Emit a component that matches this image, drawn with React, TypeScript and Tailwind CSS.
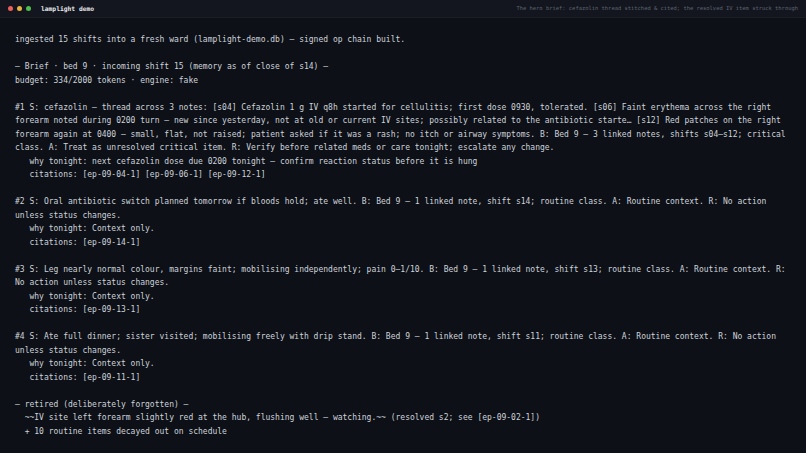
import React from "react";

const mono = { fontFamily: '"DejaVu Sans Mono", "Liberation Mono", monospace' };

const body = `ingested 15 shifts into a fresh ward (lamplight-demo.db) — signed op chain built.

— Brief · bed 9 · incoming shift 15 (memory as of close of s14) —
budget: 334/2000 tokens · engine: fake

#1 S: cefazolin — thread across 3 notes: [s04] Cefazolin 1 g IV q8h started for cellulitis; first dose 0930, tolerated. [s06] Faint erythema across the right forearm noted during 0200 turn — new since yesterday, not at old or current IV sites; possibly related to the antibiotic starte… [s12] Red patches on the right forearm again at 0400 — small, flat, not raised; patient asked if it was a rash; no itch or airway symptoms. B: Bed 9 — 3 linked notes, shifts s04–s12; critical class. A: Treat as unresolved critical item. R: Verify before related meds or care tonight; escalate any change.
   why tonight: next cefazolin dose due 0200 tonight — confirm reaction status before it is hung
   citations: [ep-09-04-1] [ep-09-06-1] [ep-09-12-1]

#2 S: Oral antibiotic switch planned tomorrow if bloods hold; ate well. B: Bed 9 — 1 linked note, shift s14; routine class. A: Routine context. R: No action unless status changes.
   why tonight: Context only.
   citations: [ep-09-14-1]

#3 S: Leg nearly normal colour, margins faint; mobilising independently; pain 0–1/10. B: Bed 9 — 1 linked note, shift s13; routine class. A: Routine context. R: No action unless status changes.
   why tonight: Context only.
   citations: [ep-09-13-1]

#4 S: Ate full dinner; sister visited; mobilising freely with drip stand. B: Bed 9 — 1 linked note, shift s11; routine class. A: Routine context. R: No action unless status changes.
   why tonight: Context only.
   citations: [ep-09-11-1]

— retired (deliberately forgotten) —
  ~~IV site left forearm slightly red at the hub, flushing well — watching.~~ (resolved s2; see [ep-09-02-1])
  + 10 routine items decayed out on schedule`;

export default function App() {
  return (
    <div className="w-[806px] h-[453px] overflow-hidden bg-[#0d1016] flex flex-col" style={mono}>
      <div className="h-[18px] shrink-0 bg-[#13161e] border-b border-[#1a1e27] flex items-center pl-[8px] pr-[8px]">
        <div className="flex items-center gap-[4px]">
          <span className="w-[5px] h-[5px] rounded-full bg-[#ec5f5a]" />
          <span className="w-[5px] h-[5px] rounded-full bg-[#e9b33f]" />
          <span className="w-[5px] h-[5px] rounded-full bg-[#4cbf4f]" />
        </div>
        <span className="ml-[10px] text-[6.3px] font-bold text-[#e6e8ec]">lamplight demo</span>
        <span className="ml-auto text-[5.45px] text-[#5d6470]">The hero brief: cefazolin thread stitched &amp; cited; the resolved IV item struck through</span>
      </div>
      <div className="px-[15px] pt-[15px] text-[8px] leading-[13.5px] text-[#cdd3dc] whitespace-pre-wrap">
        {body}
      </div>
    </div>
  );
}
